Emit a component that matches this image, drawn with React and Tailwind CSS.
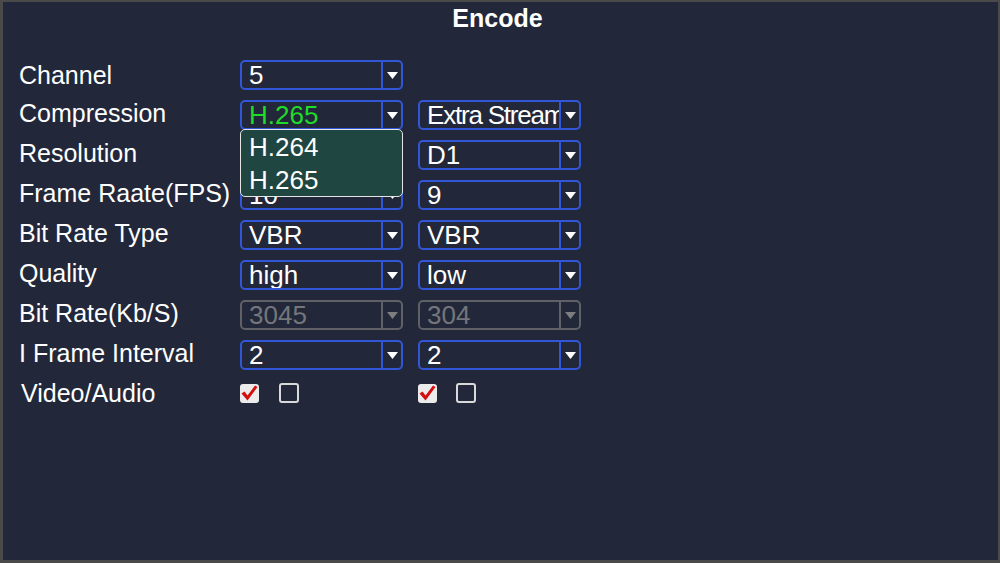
import React from "react";

const font = { fontFamily: '"Liberation Sans", Arial, sans-serif' };

function Arrow({ disabled }) {
  return (
    <svg width="11" height="7" viewBox="0 0 11 7">
      <path d="M0 0 H11 L5.5 7 Z" fill={disabled ? "#7d7d7d" : "#ffffff"} />
    </svg>
  );
}

function Select({ value, green, disabled, clip }) {
  return (
    <div
      className={`flex h-[30px] w-[163px] items-stretch rounded-[5px] border-2 ${
        disabled ? "border-[#5f6166]" : "border-[#3157d8]"
      }`}
    >
      <div
        className={`flex-1 overflow-hidden whitespace-nowrap pl-[7px] text-[26px] leading-[27px] ${
          disabled ? "text-[#74767b]" : green ? "text-[#1fdc2a]" : "text-white"
        } ${clip ? "tracking-[-1.2px]" : ""}`}
      >
        {value}
      </div>
      <div
        className={`flex w-[20px] items-center justify-center border-l-2 ${
          disabled ? "border-[#5f6166]" : "border-[#3157d8]"
        }`}
      >
        <Arrow disabled={disabled} />
      </div>
    </div>
  );
}

function Check({ checked }) {
  if (checked)
    return (
      <div className="flex h-[19px] w-[19px] items-center justify-center rounded-[3px] bg-[#ececec]">
        <svg width="17" height="16" viewBox="0 0 17 16">
          <path d="M0.5 8.5 L3.5 6.5 L6.5 10.5 L14 0.5 L16.5 2 L6.5 15.5 Z" fill="#d40f0f" />
        </svg>
      </div>
    );
  return <div className="h-[20px] w-[20px] rounded-[3px] border-2 border-[#d9d9d9]" />;
}

const rows = [
  ["Channel", ["5"], null],
  ["Compression", ["H.265", true], ["Extra Stream", false, false, true]],
  ["Resolution", ["D1"], ["D1"]],
  ["Frame Raate(FPS)", ["10"], ["9"]],
  ["Bit Rate Type", ["VBR"], ["VBR"]],
  ["Quality", ["high"], ["low"]],
  ["Bit Rate(Kb/S)", ["3045", false, true], ["304", false, true]],
  ["I Frame Interval", ["2"], ["2"]],
];

export default function App() {
  return (
    <div style={font} className="h-[563px] w-[1000px] overflow-hidden bg-[#4a4a4b] pt-[2px] pl-[3px] pr-[2px] pb-[3px]">
      <div className="relative h-full w-full bg-[#22283a] text-white">
        <div className="pt-[1px] pr-[6px] text-center text-[25px] font-bold leading-[30px]">Encode</div>
        <div className="mt-[27px] flex flex-col gap-[10px] pl-[16px]">
          {rows.map(([label, a, b], i) => (
            <div key={label} className="flex h-[30px] items-center">
              <div className={`w-[221px] text-[25px] leading-[30px] ${i === 0 ? "" : "pb-[5px]"}`}>{label}</div>
              <Select value={a[0]} green={a[1]} disabled={a[2]} />
              <div className="w-[15px]" />
              {b && <Select value={b[0]} green={b[1]} disabled={b[2]} clip={b[3]} />}
            </div>
          ))}
          <div className="-mt-[2px] flex h-[30px] items-center">
            <div className="w-[221px] pl-[2px] text-[25px] leading-[30px]">Video/Audio</div>
            <div className="flex w-[178px] items-center gap-[20px]">
              <Check checked />
              <Check />
            </div>
            <div className="flex items-center gap-[19px]">
              <Check checked />
              <Check />
            </div>
          </div>
        </div>
        <div className="absolute left-[237px] top-[127px] w-[163px] rounded-[5px] border-[1.5px] border-[#e4e4e4] bg-[#1f4641]">
          <div className="pl-[8px] pt-[1px] text-[26px] leading-[33px]">H.264</div>
          <div className="pl-[8px] text-[26px] leading-[32px]">H.265</div>
        </div>
      </div>
    </div>
  );
}
